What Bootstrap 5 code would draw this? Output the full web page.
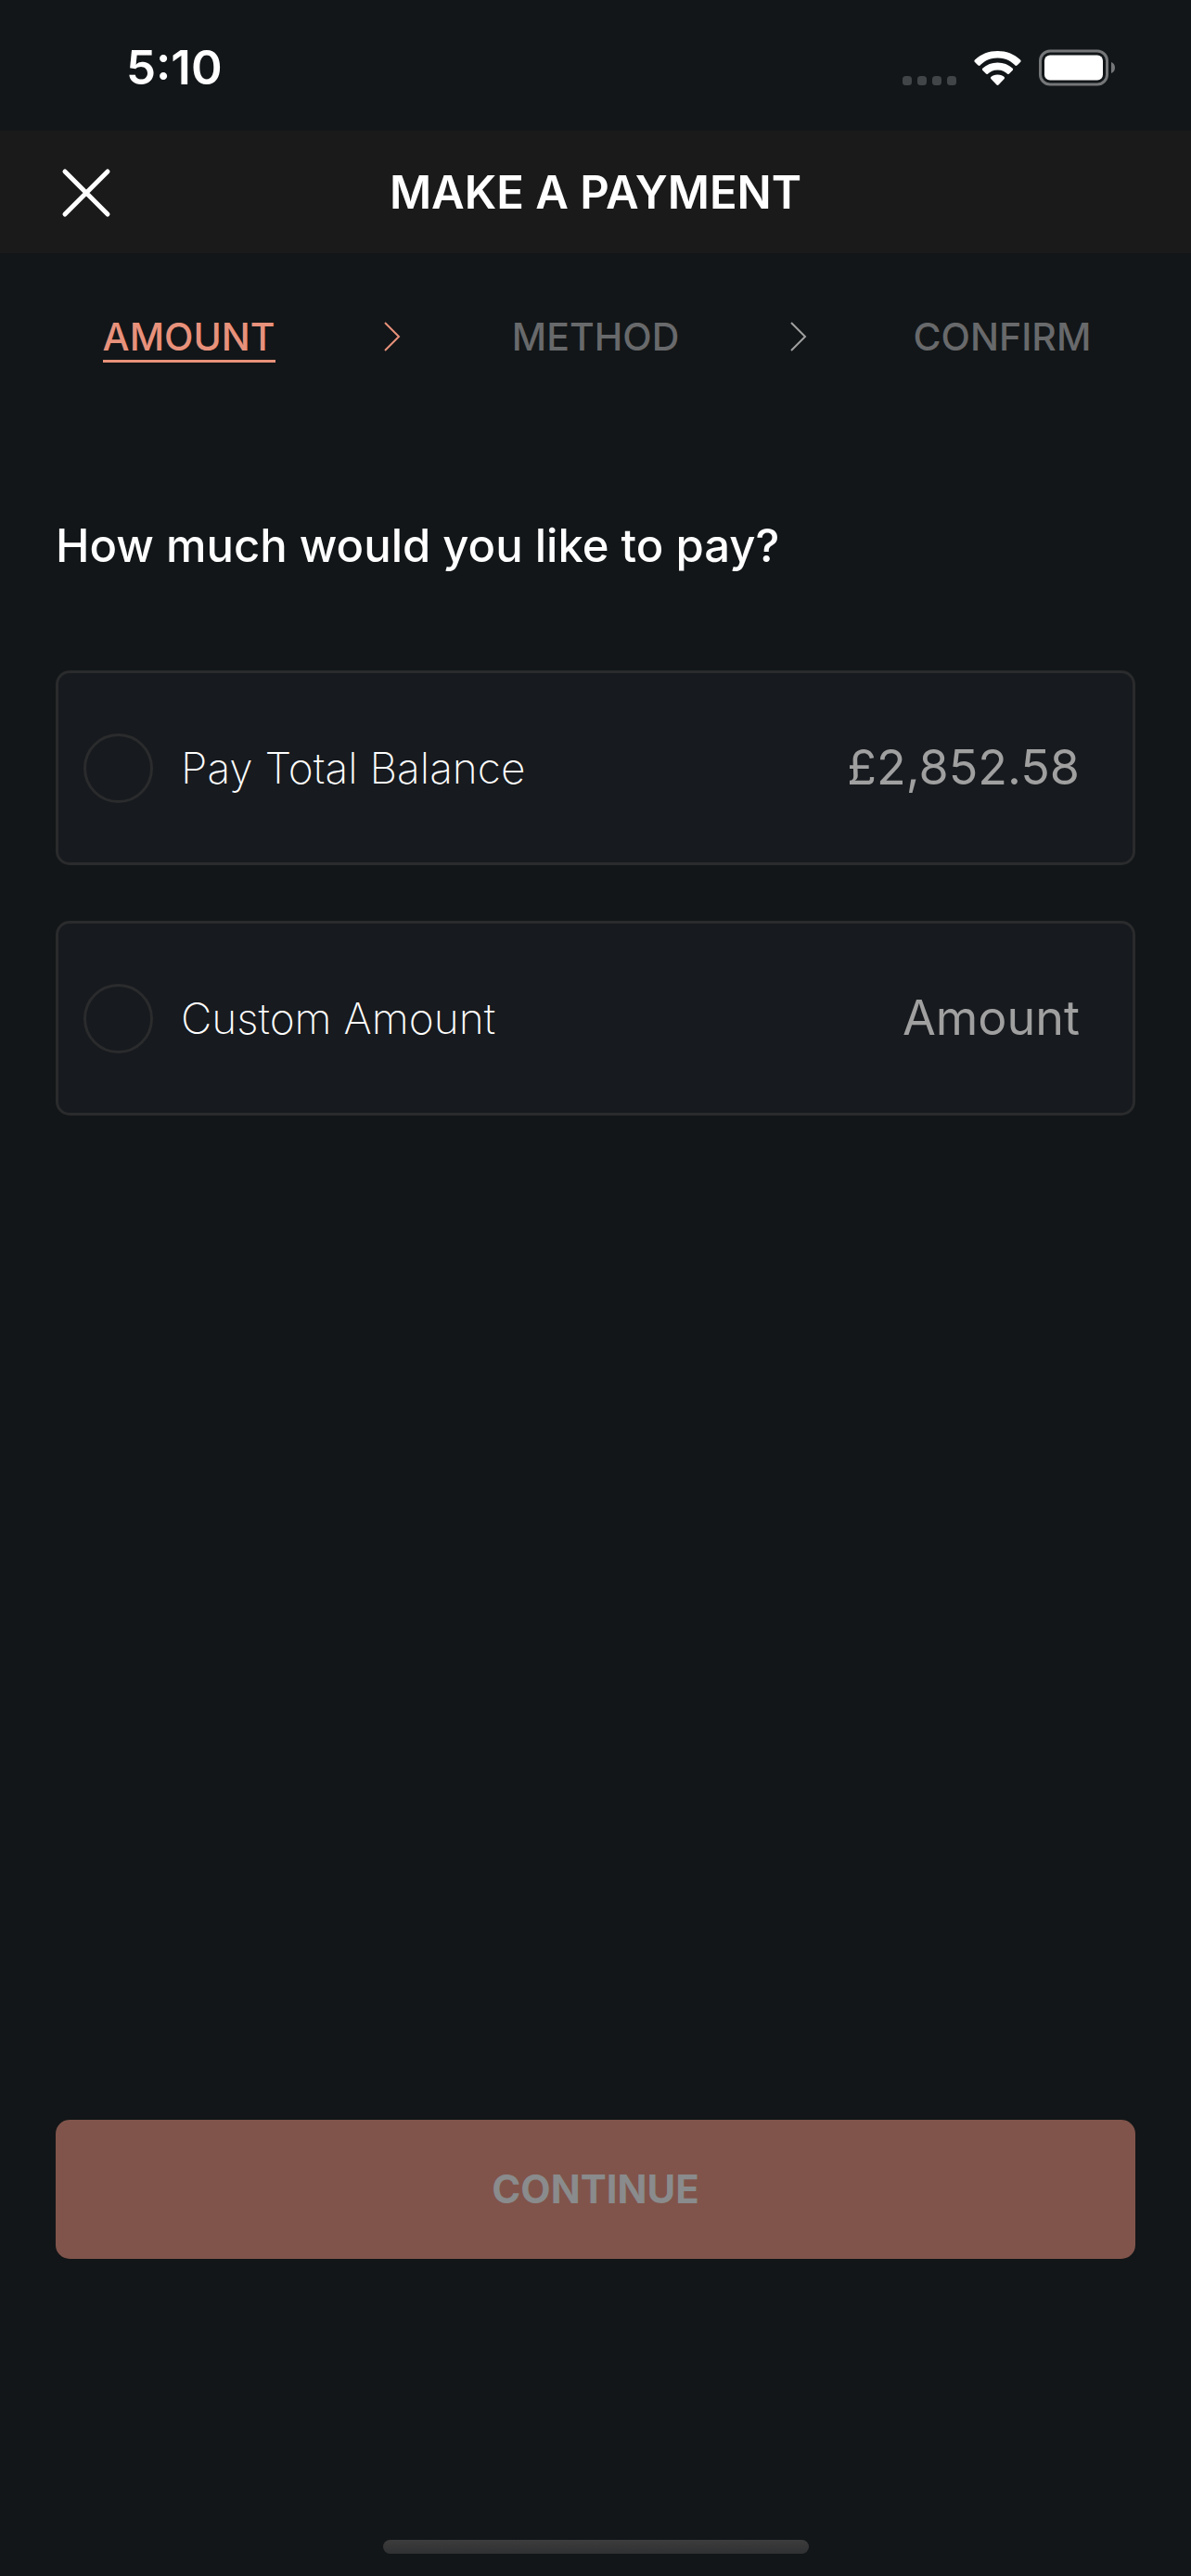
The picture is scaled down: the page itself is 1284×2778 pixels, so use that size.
<!DOCTYPE html>
<html lang="en">
<head>
<meta charset="utf-8">
<meta name="viewport" content="width=device-width, initial-scale=1">
<title>Make a payment</title>
<link rel="stylesheet" href="https://cdn.jsdelivr.net/npm/bootstrap@5.3.0/dist/css/bootstrap.min.css">
<style>
  :root {
    --page: #121618;
    --bar: #1a1a1a;
    --panel: #171a1e;
    --line: #2a2b2c;
    --accent: #e8917b;
    --muted: #68696b;
    --value: #a0a0a0;
  }
  body { background: var(--page); color: #fff; font-family: Inter, "Liberation Sans", sans-serif; }
  .status-bar { height: 141px; padding: 4px 82px 0 136px; }
  .clock { font-size: 51px; line-height: 60px; font-weight: 600; }
  .title-bar { height: 132px; padding: 2px 60px 0; background: var(--bar); }
  .side { flex: 1 1 0; }
  .close-btn { width: 66px; height: 66px; color: #fff; border-radius: 0; }
  .page-title { font-size: 49px; line-height: 60px; font-weight: 600; }
  .steps { padding: 68px 94px 0; }
  .step-link { display: inline-block; font-size: 41px; line-height: 44px; font-weight: 500; color: var(--muted); padding: 0 0 3px; border-bottom: 3px solid transparent; text-decoration: none; }
  .step-link.current { color: var(--accent); border-color: var(--accent); }
  .step-sep { height: 44px; color: var(--value); }
  .step-sep.done { color: var(--accent); }
  .content { padding: 168px 60px 0; }
  .question { font-size: 49px; line-height: 60px; font-weight: 500; margin-bottom: 104px; }
  .options { gap: 60px; }
  .option { height: 210px; padding: 0 57px 0 27px; background: var(--panel); border: 3px solid var(--line); border-radius: 15px; }
  .option-radio.form-check-input { width: 75px; height: 75px; margin: 0 30px 0 0; background-color: transparent; border: 3px solid var(--line); }
  .option-radio.form-check-input:checked { border-color: var(--accent); background-color: var(--accent); }
  .option-label { font-size: 46px; line-height: 60px; font-weight: 200; }
  .option-value { font-size: 52px; line-height: 60px; color: var(--value); }
  .option-input { width: 300px; padding: 0; border: 0; background: transparent; text-align: right; outline: 0; }
  .option-input::placeholder { color: var(--value); opacity: 1; }
  .actions { padding: 60px 60px 303px; }
  .continue-btn.btn { height: 150px; border: 0; border-radius: 15px; font-size: 42px; line-height: 48px; font-weight: 700; }
  .continue-btn.btn:disabled { background: #80544b; color: #8a8b8c; opacity: 1; }
  .home-bar { width: 459px; height: 15px; margin-bottom: 24px; border-radius: 8px; background: linear-gradient(#3c3c3d, #303132); }
</style>
</head>
<body>
<div class="min-vh-100 d-flex flex-column">
  <div class="status-bar d-flex align-items-center justify-content-between">
    <span class="clock">5:10</span>
    <svg width="230" height="40" viewBox="0 0 230 40" aria-hidden="true">
      <g fill="#414547">
        <rect x="1" y="29" width="10" height="10" rx="3.5"/><rect x="17" y="29" width="10" height="10" rx="3.5"/>
        <rect x="33" y="29" width="10" height="10" rx="3.5"/><rect x="49" y="29" width="10" height="10" rx="3.5"/>
      </g>
      <g fill="#fff">
        <path d="M103.500 9.500C93.500 9.500 89 13.500 84 18Q83 18 82 17L78.500 13.500Q78 12.500 79 11.500C86 5 94 2 103.500 2S121 5 128 11.500Q129 12.500 128.500 13.500L125 17Q124 18 123 18C118 13.500 113.500 9.500 103.500 9.500Z"/>
        <path d="M103.500 22.500C98.500 22.500 95.500 24.500 92.500 27Q92 27 91 26.500L87 22.500Q86.500 21.500 87.500 20.500C92 16.500 97 14.500 103.500 14.500S115 16.500 119.500 20.500Q120.500 21.500 120 22.500L116 26.500Q115 27 114.500 27C111.500 24.500 108.500 22.500 103.500 22.500Z"/>
        <path d="M103.500 27.500C107 27.500 109 28.500 110.700 30Q111.500 31 110.700 32L104.500 38.500Q103.500 39.300 102.500 38.500L96.300 32Q95.500 31 96.300 30C98 28.500 100 27.500 103.500 27.500Z"/>
      </g>
      <rect x="149.500" y="2" width="72" height="36" rx="10.500" fill="none" stroke="#747678" stroke-width="3"/>
      <rect x="154" y="6.500" width="63" height="27" rx="6" fill="#fff"/>
      <path d="M226 14Q230 15.500 230 20T226 26Z" fill="#747678"/>
    </svg>
  </div>

  <header class="title-bar d-flex align-items-center">
    <div class="side">
      <button type="button" class="close-btn btn p-0 border-0 d-flex align-items-center justify-content-center" aria-label="Close">
        <svg width="54" height="54" viewBox="0 0 54 54" fill="none" stroke="currentColor" stroke-width="5" stroke-linecap="round"><path d="M4 4 50 50M50 4 4 50"/></svg>
      </button>
    </div>
    <h1 class="page-title m-0">MAKE A PAYMENT</h1>
    <div class="side"></div>
  </header>

  <nav class="steps" aria-label="Payment steps">
    <div class="row g-0 text-center flex-nowrap">
      <div class="col"><a class="step-link current" href="#amount" aria-current="step">AMOUNT</a></div>
      <div class="col step-sep done d-flex align-items-center justify-content-center">
        <svg width="18" height="32" viewBox="0 0 18 32" fill="none" stroke="currentColor" stroke-width="2" aria-hidden="true"><path d="M1 1 16 16 1 31"/></svg>
      </div>
      <div class="col"><a class="step-link" href="#method">METHOD</a></div>
      <div class="col step-sep d-flex align-items-center justify-content-center">
        <svg width="18" height="32" viewBox="0 0 18 32" fill="none" stroke="currentColor" stroke-width="2" aria-hidden="true"><path d="M1 1 16 16 1 31"/></svg>
      </div>
      <div class="col"><a class="step-link" href="#confirm">CONFIRM</a></div>
    </div>
  </nav>

  <main class="content flex-grow-1" id="amount">
    <h2 class="question">How much would you like to pay?</h2>
    <div class="options d-flex flex-column">
      <div class="option d-flex align-items-center">
        <input class="option-radio form-check-input flex-shrink-0" type="radio" name="pay" id="pay-total">
        <label class="option-label flex-grow-1" for="pay-total">Pay Total Balance</label>
        <span class="option-value">£2,852.58</span>
      </div>
      <div class="option d-flex align-items-center">
        <input class="option-radio form-check-input flex-shrink-0" type="radio" name="pay" id="pay-custom">
        <label class="option-label flex-grow-1" for="pay-custom">Custom Amount</label>
        <input class="option-value option-input" type="text" inputmode="decimal" placeholder="Amount" aria-label="Custom amount">
      </div>
    </div>
  </main>

  <div class="actions">
    <button type="button" class="continue-btn btn w-100" disabled>CONTINUE</button>
  </div>
  <div class="home-bar mx-auto"></div>
</div>
<script src="https://cdn.jsdelivr.net/npm/bootstrap@5.3.0/dist/js/bootstrap.bundle.min.js"></script>
</body>
</html>
